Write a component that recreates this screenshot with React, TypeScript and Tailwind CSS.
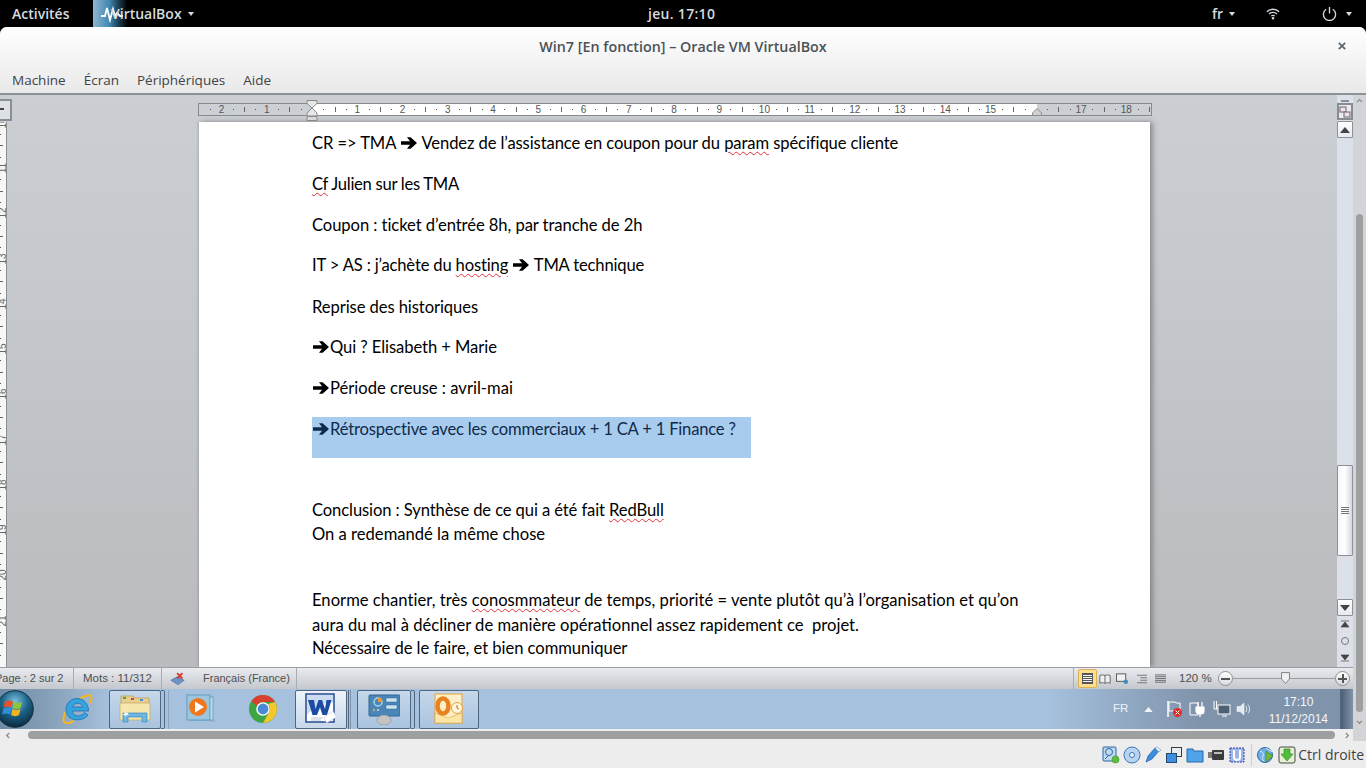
import { Fragment } from 'react';
import type { ReactNode } from 'react';

const cm = 45.24;
const zeroX = 113; // position of 0 inside the ruler

function Arrow({ className = '' }: { className?: string }) {
  return (
    <svg viewBox="0 0 18 14" className={`inline-block w-[18px] h-[14px] align-[-1px] ${className}`}>
      <path d="M1 5.2h9L7 1.2h3.6L17 7l-6.4 5.800H7l3-4H1z" fill="currentColor" />
    </svg>
  );
}

function Squiggle({ children }: { children: string }) {
  return (
    <span className="underline decoration-wavy decoration-[#e0303a] decoration-1 underline-offset-2">{children}</span>
  );
}

function HRuler() {
  const ticks = [];
  for (let i = -9; i <= 74; i++) {
    const x = zeroX + (i * cm) / 4;
    const mod = ((i % 4) + 4) % 4;
    if (i === 0 || i === 64) continue;
    if (mod === 0) {
      ticks.push(
        <span
          key={i}
          className="absolute top-[-1px] -translate-x-1/2 text-[10px] leading-[13px] text-[#555]"
          style={{ left: x }}
        >
          {Math.abs(i / 4)}
        </span>
      );
    } else if (mod === 2) {
      ticks.push(<span key={i} className="absolute top-[3px] w-px h-[5px] bg-[#666]" style={{ left: x }} />);
    } else {
      ticks.push(<span key={i} className="absolute top-[5px] w-px h-px bg-[#555]" style={{ left: x }} />);
    }
  }
  return (
    <div className="relative ml-[198px] w-[954px] h-[13px] border border-[#868a8f] bg-[#ccd0d5]">
      <div className="absolute left-[113px] top-0 w-[725px] h-full bg-white" />
      {ticks}
      <svg viewBox="0 0 12 21" className="absolute left-[107px] top-[-4px] w-3 h-[21px]">
        <path d="M1 .5h10v3L6 8 1 3.500zM6 8l5 5v3H1v-3z" fill="#e6e6e6" stroke="#8a8a8a" />
        <path d="M1 16.500h10v4H1z" fill="#d8d8d8" stroke="#8a8a8a" />
      </svg>
      <svg viewBox="0 0 10 8" className="absolute left-[833px] top-[4px] w-[10px] h-2">
        <path d="M5 .5L9.500 5v2.500H.5V5z" fill="#d0d0d0" stroke="#8a8a8a" />
      </svg>
    </div>
  );
}

function VRuler() {
  const nums = [];
  for (let n = 10; n <= 21; n++) {
    const y = 46 + (n - 11) * 45.25;
    nums.push(
      <Fragment key={n}>
        <span
          className="absolute left-[-3px] w-3 text-center text-[10px] leading-3 text-[#666] -rotate-90"
          style={{ top: y - 6 }}
        >
          {n}
        </span>
        <span className="absolute left-0 w-[3px] h-px bg-[#666]" style={{ top: y + 22.6 }} />
        <span className="absolute left-0 w-px h-px bg-[#555]" style={{ top: y + 11.3 }} />
        <span className="absolute left-0 w-px h-px bg-[#555]" style={{ top: y + 34 }} />
      </Fragment>
    );
  }
  return <div className="relative w-[7px] h-full shrink-0 overflow-hidden bg-[#f7f7f7] border-r border-[#8a8f96]">{nums}</div>;
}

function WordScrollbar() {
  return (
    <div className="w-4 shrink-0 flex flex-col items-stretch bg-[#dce1e9]">
      <div className="mt-[5px] mx-1 h-[2px] bg-[#8c9096]" />
      <div className="mt-[1px] h-[17px] border-2 border-[#888c92] bg-[#e9ebee] flex items-center justify-center">
        <svg viewBox="0 0 12 12" className="w-3 h-3">
          <rect x="1" y="1" width="6" height="5" fill="#f3dfe8" stroke="#666" />
          <rect x="5" y="6" width="6" height="5" fill="#f3dfe8" stroke="#666" />
        </svg>
      </div>
      <div className="mt-px h-[17px] rounded-[1px] border border-[#8c9096] bg-gradient-to-b from-white to-[#e6e9ef] flex items-center justify-center">
        <svg viewBox="0 0 10 6" className="w-[10px] h-[6px]"><path d="M5 0l5 6H0z" fill="#444" /></svg>
      </div>
      <div className="flex-1 min-h-0">
        <div className="mt-[327px] h-[91px] rounded-[1px] border border-[#8c9096] bg-gradient-to-r from-[#f6f7f9] via-white to-[#d3d7df] flex flex-col gap-[1px] items-center justify-center">
          <div className="w-2 h-px bg-[#777]" />
          <div className="w-2 h-px bg-[#777]" />
          <div className="w-2 h-px bg-[#777]" />
          <div className="w-2 h-px bg-[#777]" />
        </div>
      </div>
      <div className="h-[17px] shrink-0 rounded-[1px] border border-[#8c9096] bg-gradient-to-b from-white to-[#e6e9ef] flex items-center justify-center">
        <svg viewBox="0 0 10 6" className="w-[10px] h-[6px]"><path d="M5 6L10 0H0z" fill="#444" /></svg>
      </div>
      <div className="h-[51px] shrink-0 flex flex-col items-center pt-[4px] gap-[8px]">
        <svg viewBox="0 0 8 8" className="w-2 h-2"><path d="M0 1h8M4 2L8 7H0z" fill="#444" stroke="#444" strokeWidth=".7" /></svg>
        <div className="w-[8px] h-[8px] rounded-full border border-[#777] mt-[1px]" />
        <svg viewBox="0 0 8 8" className="w-2 h-2 mt-[1px]"><path d="M0 7h8M4 6L8 1H0z" fill="#444" stroke="#444" strokeWidth=".7" /></svg>
      </div>
    </div>
  );
}

function WinOrb() {
  return (
    <svg viewBox="0 0 38 38" className="w-[38px] h-[38px]">
      <defs>
        <radialGradient id="orb" cx="50%" cy="30%" r="70%">
          <stop offset="0" stopColor="#7cc0dd" />
          <stop offset="0.5" stopColor="#1d6488" />
          <stop offset="1" stopColor="#0b2a40" />
        </radialGradient>
      </defs>
      <circle cx="19" cy="19" r="18.300" fill="url(#orb)" stroke="#16303f" />
      <path d="M9 11.500c3-1.500 5-1.500 8 0l-1.500 6c-3-1.500-5-1.500-8 0z" fill="#e8502a" />
      <path d="M18 12c3 1.500 5 1.500 8 0l-1.500 6c-3 1.500-5 1.500-8 0z" fill="#8cc63a" />
      <path d="M7.500 18.500c3-1.500 5-1.500 8 0l-1.500 6c-3-1.500-5-1.500-8 0z" fill="#2e8fd6" />
      <path d="M16.500 19c3 1.500 5 1.500 8 0l-1.500 6c-3 1.500-5 1.500-8 0z" fill="#f3b51d" />
    </svg>
  );
}

function IeIcon() {
  return (
    <svg viewBox="0 0 32 32" className="w-8 h-8">
      <path d="M3 29C0 21 14 4 29 2" fill="none" stroke="#f2b71e" strokeWidth="2.200" />
      <path d="M29 2c2 1 2 5 0 8M3 29c2 2 6 1 10-1" fill="none" stroke="#f2b71e" strokeWidth="2" />
      <path d="M5 17C5 9.500 10.500 5.500 16 5.500S27.500 9.500 27.500 18H11.500c0 6 8.500 6.500 12 1.500l3.500 2.500c-5 7.500-22 6.500-22-5zM11.500 14h10c0-5-9-5-10 0z" fill="#35a4de" stroke="#1b6fae" strokeWidth=".8" />
    </svg>
  );
}

function FolderIcon() {
  return (
    <svg viewBox="0 0 32 32" className="w-8 h-8">
      <path d="M2 3h12l2 2h14v7H2z" fill="#e8cf8e" stroke="#b49a5a" strokeWidth=".7" />
      <rect x="4" y="4" width="3" height="2" fill="#3fae3f" />
      <rect x="12" y="5" width="3" height="2" fill="#d23f3f" />
      <rect x="21" y="6" width="3" height="2" fill="#3f8fd2" />
      <path d="M1 10h30v17H1z" fill="#f6e7ae" stroke="#c2a868" strokeWidth=".7" />
      <path d="M4 29v-9h24v9h-5v-5H9v5z" fill="#6db7e3" stroke="#3f87b8" strokeWidth=".7" />
      <path d="M6 18l1.500 2 2-1-1 2 2 1-3 0-1 2-1-2-2 0 2-1.500z" fill="#fff" />
    </svg>
  );
}

function MediaIcon() {
  return (
    <svg viewBox="0 0 30 30" className="w-[30px] h-[30px]">
      <rect x="5" y="3" width="22" height="23" fill="#c2dbe9" stroke="#6aa5c8" />
      <rect x="1" y="1" width="23" height="25" fill="#9cc6de" stroke="#5f9dc2" />
      <circle cx="12" cy="13" r="9" fill="#f0771f" />
      <path d="M9 7.500l9 5.500-9 5.500z" fill="#fff" />
      <path d="M24 27h5" stroke="#8aa2b8" />
    </svg>
  );
}

function ChromeIcon() {
  return (
    <svg viewBox="0 0 30 30" className="w-[30px] h-[30px]">
      <circle cx="15" cy="15" r="14" fill="#3da544" />
      <path d="M15 1a14 14 0 0 1 12.100 7L15 8a7 7 0 0 0-6.300 4L3.500 7A14 14 0 0 1 15 1z" fill="#d9402f" />
      <path d="M27.100 8A14 14 0 0 1 15 29l6-10.500A7 7 0 0 0 20 10z" fill="#f5c52c" />
      <circle cx="15" cy="15" r="6.800" fill="#fff" />
      <circle cx="15" cy="15" r="5.400" fill="#4a89d6" />
    </svg>
  );
}

function WordIcon() {
  return (
    <svg viewBox="0 0 32 32" className="w-8 h-8">
      <rect x="1" y="1" width="28" height="28" fill="#fff" stroke="#24478e" strokeWidth="1.500" />
      <path d="M2 2h26v8C20 8 10 14 2 22z" fill="#c9dcf2" />
      <path d="M3 7h6l1.500 9L13.500 7h3.500l3 9L21.500 7h5l-4.500 15h-4.500l-2.500-7.500L12 22H7.500z" fill="#1d4da3" />
      <path d="M19 24l9-6 3.500 6-10 6z" fill="#fff" stroke="#b6c4d6" strokeWidth=".6" />
      <path d="M6 25h12M6 27h10" stroke="#b9c6da" />
    </svg>
  );
}

function ControlIcon() {
  return (
    <svg viewBox="0 0 32 32" className="w-8 h-8">
      <rect x="1" y="2" width="31" height="21" rx="1" fill="#4a86b8" stroke="#2e6594" />
      <circle cx="10" cy="9" r="4" fill="none" stroke="#a8d3ea" strokeWidth="1.500" />
      <path d="M10 4.500a4.500 4.500 0 0 1 4.500 4.500H10z" fill="#f09a2e" />
      <rect x="18" y="5" width="11" height="4" fill="#c9e3f1" stroke="#2e6594" strokeWidth=".5" />
      <rect x="18" y="12" width="11" height="4" fill="#c9e3f1" stroke="#2e6594" strokeWidth=".5" />
      <circle cx="6" cy="17" r="1" fill="#f0b24a" />
      <circle cx="10" cy="17" r="1" fill="#c9e3f1" />
      <ellipse cx="16" cy="27" rx="7" ry="5" fill="#c3c3c3" stroke="#8c8c8c" strokeWidth=".6" />
    </svg>
  );
}

function OutlookIcon() {
  return (
    <svg viewBox="0 0 32 32" className="w-8 h-8">
      <rect x="2" y="1" width="27" height="29" fill="#fdf0c8" stroke="#e3a23a" />
      <path d="M2 20l13 5 14-5v10H2z" fill="#fbe6a8" stroke="#e3a23a" strokeWidth=".6" />
      <ellipse cx="10" cy="13" rx="5.500" ry="7.500" fill="none" stroke="#e9821e" strokeWidth="4.500" />
      <circle cx="24" cy="15" r="5.500" fill="#fff6dc" stroke="#e3a23a" />
      <path d="M24 12v3l2 1" stroke="#c0641a" fill="none" />
    </svg>
  );
}

function TaskButton({ children, active, width, stacked = 0 }: { children: ReactNode; active?: boolean; width: string; stacked?: number }) {
  return (
    <div className="flex h-[39px]">
      <div
        className={`flex items-center justify-center ${width} h-full rounded-[2px] border border-[#4f6680] ${
          active ? 'bg-gradient-to-b from-[#eef3f9] to-[#c8d8ea]' : 'bg-gradient-to-b from-[#c6d8ea] to-[#a9c3de]'
        }`}
      >
        {children}
      </div>
      {stacked === 1 && <div className="w-[4px] border border-l-0 border-[#4f6680] rounded-r-[2px]" />}
      {stacked === 2 && <div className="w-[2px] border-r border-[#4f6680]" />}
      {stacked === 2 && <div className="w-[2px] border-r border-[#7f93aa]" />}
    </div>
  );
}

function Tray() {
  return (
    <div className="flex items-center gap-[5px] text-white">
      <svg viewBox="0 0 10 6" className="w-[9px] h-[5px] mr-[7px]"><path d="M5 0l5 6H0z" fill="#f2f5f8" /></svg>
      <svg viewBox="0 0 18 18" className="w-[18px] h-[18px]">
        <path d="M3 1v16" stroke="#fff" strokeWidth="1.500" />
        <path d="M4 2h6l1 1h4v8H4z" fill="none" stroke="#fff" />
        <circle cx="12.500" cy="12.500" r="4.500" fill="#d9302c" />
        <path d="M10.500 10.500l4 4m0-4l-4 4" stroke="#fff" />
      </svg>
      <svg viewBox="0 0 18 18" className="w-[18px] h-[18px]">
        <path d="M2 3h8v12H2z" fill="none" stroke="#fff" />
        <path d="M8 7h8v4a3 3 0 0 1-3 3h-2a3 3 0 0 1-3-3zM10 2v5m4-5v5M12 14v3" fill="#fff" stroke="#fff" strokeWidth="1.200" />
      </svg>
      <svg viewBox="0 0 18 18" className="w-[18px] h-[18px] ml-[2px]">
        <rect x="5" y="5" width="12" height="9" fill="#4d6076" stroke="#fff" />
        <path d="M1 1v8M3.500 1v8M9 16h5M1 9h4" stroke="#fff" />
      </svg>
      <svg viewBox="0 0 16 16" className="w-4 h-4">
        <path d="M1 5.500h3L8 2v12L4 10.500H1z" fill="#e4eaf0" stroke="#fff" strokeWidth=".5" />
        <path d="M10 5c1 2 1 4 0 6M12 3.500c2 3 2 6 0 9" stroke="#e4eaf0" fill="none" />
      </svg>
    </div>
  );
}

function VboxStatusIcons() {
  return (
    <div className="flex items-center gap-[3px]">
      <svg viewBox="0 0 18 18" className="w-[18px] h-[18px]">
        <rect x="1" y="1" width="13" height="14" rx="1" fill="#bfd9ee" stroke="#2a67a8" />
        <circle cx="7" cy="6" r="3.500" fill="none" stroke="#2a67a8" />
        <path d="M3 13l4-4" stroke="#2a67a8" />
        <circle cx="13.500" cy="13.500" r="3.500" fill="#5fbf3d" stroke="#3d8f25" strokeWidth=".6" />
      </svg>
      <svg viewBox="0 0 18 18" className="w-[18px] h-[18px]">
        <circle cx="9" cy="9" r="8" fill="#b8d4f0" stroke="#3b78b8" />
        <circle cx="9" cy="9" r="2.500" fill="#e8f1fa" stroke="#3b78b8" />
      </svg>
      <svg viewBox="0 0 18 18" className="w-[18px] h-[18px]">
        <path d="M2 16l2-6 7-8 4 3-7 8z" fill="#3b8fe0" stroke="#1f5fa8" strokeWidth=".7" />
        <path d="M11 2l2-1 4 3-2 2z" fill="#e8f1fa" stroke="#7a8ea5" strokeWidth=".6" />
      </svg>
      <svg viewBox="0 0 18 18" className="w-[18px] h-[18px]">
        <rect x="6.500" y="1.500" width="10" height="9" fill="#e8edf2" stroke="#3b3b3b" />
        <rect x="1.500" y="7.500" width="10" height="9" fill="#3b8fe0" stroke="#26496f" />
      </svg>
      <svg viewBox="0 0 18 18" className="w-[18px] h-[18px]">
        <path d="M1 3h6l1 2h9v11H1z" fill="#4fa3e8" stroke="#2a67a8" />
      </svg>
      <svg viewBox="0 0 18 18" className="w-[18px] h-[18px]">
        <rect x="5" y="4" width="12" height="10" rx="1" fill="#3b3b3b" />
        <rect x="1" y="6" width="4" height="6" fill="#7a7a7a" />
        <rect x="7" y="6" width="8" height="2" fill="#bbbbbb" />
      </svg>
      <svg viewBox="0 0 18 18" className="w-[18px] h-[18px]">
        <rect x="2" y="2" width="14" height="14" fill="#9cb6ea" stroke="#2f3fa8" strokeDasharray="2 1" />
        <path d="M6 4v7a3 3 0 0 0 6 0V4" fill="none" stroke="#fff" strokeWidth="2" />
      </svg>
      <div className="w-px h-[22px] bg-[#cfcfcf] mx-[2px]" />
      <svg viewBox="0 0 18 18" className="w-[18px] h-[18px]">
        <circle cx="8" cy="9" r="7.500" fill="#6fb0e8" stroke="#2a67a8" />
        <path d="M3 5c3 1 4 3 3 5s-1 3 1 5M9 2c2 2 5 2 6 4" stroke="#e8f1fa" fill="none" />
        <path d="M9 5l7 5-7 6z" fill="#6fb93f" stroke="#3d7f22" strokeWidth=".6" />
      </svg>
      <svg viewBox="0 0 18 18" className="w-[18px] h-[18px]">
        <rect x="1" y="1" width="16" height="16" rx="2" fill="#e8ecd8" stroke="#3f4f3f" />
        <path d="M6 3h6v5h3l-6 7-6-7h3z" fill="#4fbf3a" stroke="#2f7f22" strokeWidth=".6" />
      </svg>
    </div>
  );
}

export default function App() {
  const line = 'h-[20.75px] leading-[20.75px]';
  return (
    <div className="w-[1366px] h-[768px] overflow-hidden bg-black flex flex-col font-['Open_Sans','Noto_Sans',sans-serif]">
      {/* gnome top bar */}
      <div className="relative h-[27px] shrink-0 flex items-center text-[#d6dbdf] text-[14px] font-semibold">
        <span className="ml-3 w-[59px]">Activités</span>
        <div className="ml-[22px] flex items-center">
          <div className="w-[33px] h-[27px] bg-gradient-to-r from-[#8db5cf] via-[#3e87b0] to-[#050d12] flex items-center justify-center">
            <svg viewBox="0 0 24 18" className="ml-[5px] w-6 h-[18px]">
              <path d="M1 11h4l2-8 3 12 3-11 2 7 2-3 3 3h3" stroke="#fff" strokeWidth="1.800" fill="none" />
            </svg>
          </div>
          <span className="-ml-[15px] relative">VirtualBox</span>
          <span className="ml-[6px] w-0 h-0 border-x-[3.5px] border-x-transparent border-t-[4px] border-t-[#d6dbdf]" />
        </div>
        <span className="absolute left-[648px] tracking-[0.3px]">jeu. 17:10</span>
        <div className="ml-auto flex items-center">
          <span>fr</span>
          <span className="ml-[6px] w-0 h-0 border-x-[3.5px] border-x-transparent border-t-[4px] border-t-[#d6dbdf]" />
          <svg viewBox="0 0 16 14" className="ml-[31px] w-[14px] h-[13px]">
            <path d="M1 5a10 10 0 0 1 14 0M3.500 7.500a6.500 6.500 0 0 1 9 0M6 10a3 3 0 0 1 4 0" stroke="#d6dbdf" strokeWidth="1.500" fill="none" />
            <circle cx="8" cy="12.500" r="1.400" fill="#d6dbdf" />
          </svg>
          <svg viewBox="0 0 16 16" className="ml-[42px] w-[15px] h-[15px]">
            <path d="M4.500 3.500a6.500 6.500 0 1 0 7 0M8 1v7" stroke="#d6dbdf" strokeWidth="1.400" fill="none" />
          </svg>
          <span className="ml-[9px] mr-[14px] w-0 h-0 border-x-[3.5px] border-x-transparent border-t-[4px] border-t-[#d6dbdf]" />
        </div>
      </div>

      {/* virtualbox window */}
      <div className="flex-1 flex flex-col rounded-t-[7px] overflow-hidden bg-[#ededed]">
        <div className="h-[68px] shrink-0 flex flex-col bg-gradient-to-b from-white to-[#e9e9e9] border-b-2 border-[#8e9296]">
          <div className="relative h-[40px] flex items-center justify-center text-[#4b5257] text-[14.3px] font-semibold">
            Win7 [En fonction] – Oracle VM VirtualBox
            <svg viewBox="0 0 10 10" className="absolute right-[20px] top-[15px] w-2 h-2">
              <path d="M1 1l8 8m0-8l-8 8" stroke="#5b6770" strokeWidth="2.200" />
            </svg>
          </div>
          <div className="flex gap-[18px] pl-3 text-[13.5px] leading-[18px] text-[#3e4347] mt-[4px]">
            <span>Machine</span>
            <span>Écran</span>
            <span>Périphériques</span>
            <span>Aide</span>
          </div>
        </div>

        {/* guest screen */}
        <div className="h-[646px] shrink-0 flex font-['Liberation_Sans',sans-serif]">
          <div className="w-[1353px] shrink-0 flex flex-col">
            {/* word surface */}
            <div className="flex-1 min-h-0 flex bg-gradient-to-b from-[#cbcfd4] to-[#b9bbbe]">
              <div className="flex-1 min-w-0 flex flex-col">
                <div className="relative h-[27px] shrink-0 pt-2">
                  <div className="absolute left-0 top-[4px] w-[12px] h-[22px] border-2 border-[#8a8f96] border-l-0 bg-[#dde0e4]">
                    <div className="mt-[7px] w-1 h-[2px] bg-[#444]" />
                  </div>
                  <HRuler />
                </div>
                <div className="flex-1 min-h-0 flex">
                  <VRuler />
                  <div className="ml-[192px] w-[951px] h-full bg-white shadow-[3px_0_5px_rgba(90,90,90,0.55),-1px_0_2px_rgba(120,120,120,0.3)] pl-[113px] text-black text-[16.6px] font-['Lato',sans-serif] whitespace-pre overflow-hidden">
                    <p className={`${line} mt-[11px] tracking-[-0.1px]`}>CR =&gt; TMA <Arrow /> Vendez de l’assistance en coupon pour du <Squiggle>param</Squiggle> spécifique cliente</p>
                    <p className={`${line} mt-5 tracking-[-0.28px]`}><Squiggle>Cf</Squiggle> Julien sur les TMA</p>
                    <p className={`${line} mt-5 tracking-[-0.07px]`}>Coupon : ticket d’entrée 8h, par tranche de 2h</p>
                    <p className={`${line} mt-5 tracking-[-0.17px]`}>IT &gt; AS : j’achète du <Squiggle>hosting</Squiggle> <Arrow /> TMA technique</p>
                    <p className={`${line} mt-[20.5px] tracking-[-0.08px]`}>Reprise des historiques</p>
                    <p className={`${line} mt-5 tracking-[-0.08px]`}><Arrow />Qui ? Elisabeth + Marie</p>
                    <p className={`${line} mt-5`}><Arrow />Période creuse : avril-mai</p>
                    <div className="mt-[18.5px] w-[439px] h-[41px] pt-[2px] bg-[#a8ccee] text-[#0f2a4a] leading-[21px] tracking-[-0.19px]"><Arrow />Rétrospective avec les commerciaux + 1 CA + 1 Finance ?</div>
                    <p className={`${line} mt-[42px] tracking-[-0.11px]`}>Conclusion : Synthèse de ce qui a été fait <Squiggle>RedBull</Squiggle></p>
                    <p className={`${line} mt-[3px]`}>On a redemandé la même chose</p>
                    <p className={`${line} mt-[45px] tracking-[0.02px]`}>Enorme chantier, très <Squiggle>conosmmateur</Squiggle> de temps, priorité = vente plutôt qu’à l’organisation et qu’on</p>
                    <p className={`${line} mt-1`}>aura du mal à décliner de manière opérationnel assez rapidement ce  projet.</p>
                    <p className={`${line} mt-[3px] tracking-[-0.05px]`}>Nécessaire de le faire, et bien communiquer</p>
                  </div>
                </div>
              </div>
              <WordScrollbar />
            </div>

            {/* word status bar */}
            <div className="h-[22px] shrink-0 flex items-center border-t border-[#9a9ea4] bg-gradient-to-b from-[#e9ebee] to-[#c4c8ce] text-[11.5px] text-[#4f4f4f]">
              <span className="w-[73px] shrink-0"><span className="block -ml-[5px] whitespace-nowrap text-[11px]">Page : 2 sur 2</span></span>
              <span className="w-px h-full bg-[#a8acb2]" />
              <span className="w-[87px] pl-[9px] whitespace-nowrap">Mots : 11/312</span>
              <span className="w-px h-full bg-[#a8acb2]" />
              <svg viewBox="0 0 18 16" className="ml-2 w-4 h-[15px]">
                <path d="M1 10l7-4 8 4-7 5z" fill="#6f93c8" stroke="#3f5f95" strokeWidth=".6" />
                <path d="M8 2l6 6m0-6l-6 6" stroke="#d8382c" strokeWidth="2" />
              </svg>
              <span className="ml-[17px] w-[93px] text-[11px] whitespace-nowrap">Français (France)</span>
              <span className="w-px h-full bg-[#a8acb2]" />
              <div className="ml-auto h-full flex items-center mr-[3px]">
                <span className="w-px h-full bg-[#a8acb2]" />
                <div className="w-[19px] h-[19px] ml-1 rounded-[2px] border border-[#e0b050] bg-[#fbdf8f] flex items-center justify-center">
                  <div className="w-[11px] h-[11px] border border-[#555] bg-[repeating-linear-gradient(#555_0,#555_1px,#f6f6f6_1px,#f6f6f6_2px)]" />
                </div>
                <svg viewBox="0 0 14 12" className="ml-[2px] w-3 h-3"><path d="M7 2C5 1 3 1 1 2v9c2-1 4-1 6 0 2-1 4-1 6 0V2c-2-1-4-1-6 0zm0 0v9" fill="#f0f0f0" stroke="#555" /></svg>
                <svg viewBox="0 0 14 12" className="ml-[5px] w-[13px] h-3"><rect x=".5" y=".5" width="10" height="8" fill="#f0f0f0" stroke="#555" /><circle cx="10.500" cy="9" r="2.500" fill="#3d8fb8" /></svg>
                <svg viewBox="0 0 12 10" className="ml-[8px] w-[10px] h-[10px]"><path d="M0 .5h12M4 3.500h8M4 6.500h8M0 9.500h12" stroke="#666" /></svg>
                <svg viewBox="0 0 12 10" className="ml-[8px] w-[11px] h-[10px]"><path d="M0 .5h12M0 2.500h12M0 4.500h12M0 6.500h12M0 8.500h12" stroke="#666" /></svg>
                <span className="ml-[13px] w-[31px] whitespace-nowrap">120 %</span>
                <div className="ml-[8px] w-[15px] h-[15px] rounded-full border border-[#8d9197] bg-gradient-to-b from-white to-[#d8dade] flex items-center justify-center">
                  <div className="w-[9px] h-[2px] bg-[#555]" />
                </div>
                <div className="relative w-[102px] h-px bg-[#9a9ea4]">
                  <svg viewBox="0 0 10 13" className="absolute left-[48px] top-[-6px] w-[9px] h-[12px]"><path d="M.5.5h9v7L5 12.500.5 7.500z" fill="#eef0f2" stroke="#777" /></svg>
                </div>
                <div className="w-[15px] h-[15px] rounded-full border border-[#8d9197] bg-gradient-to-b from-white to-[#d8dade] flex items-center justify-center relative">
                  <div className="w-[9px] h-[2px] bg-[#555]" />
                  <div className="absolute w-[2px] h-[9px] bg-[#555]" />
                </div>
              </div>
            </div>

            {/* windows taskbar */}
            <div className="h-[40px] shrink-0 flex items-center bg-[#a6c1dd] relative">
              <div className="absolute left-0 top-0 h-full w-[110px] bg-gradient-to-r from-[#6e8aa5] via-[#8aa3bc] to-[#a6c1dd]" />
              <div className="relative -ml-[4px] w-[38px]"><WinOrb /></div>
              <div className="relative ml-[27px] w-8"><IeIcon /></div>
              <div className="relative ml-[16px] flex items-center">
                <TaskButton width="w-[52px]" stacked={1}><FolderIcon /></TaskButton>
                <div className="w-px h-[39px] ml-[3px] bg-[#8ba4bf]" />
              </div>
              <div className="relative ml-[17px] w-[30px]"><MediaIcon /></div>
              <div className="relative ml-[32px] w-[30px]"><ChromeIcon /></div>
              <div className="relative ml-[17px]"><TaskButton active width="w-[52px]" stacked={2}><WordIcon /></TaskButton></div>
              <div className="relative ml-[6px]"><TaskButton width="w-[54px]" stacked={1}><ControlIcon /></TaskButton></div>
              <div className="relative ml-[4px]"><TaskButton width="w-[60px]"><OutlookIcon /></TaskButton></div>
              <div className="ml-auto relative h-full w-[305px] flex items-center bg-gradient-to-r from-[#a6c1dd] via-[#7f93ab] to-[#7f93ab]">
                <span className="ml-[65px] mr-[16px] text-[11.5px] text-[#eef2f6]">FR</span>
                <Tray />
                <div className="ml-auto mr-[12px] text-[12px] leading-[17px] text-center text-[#f4f7fa] pt-[3px]">
                  <div>17:10</div>
                  <div>11/12/2014</div>
                </div>
                <div className="w-[13px] h-full border-l border-[#4f6680] bg-gradient-to-r from-[#4d5f75] to-[#7f93ab]" />
              </div>
            </div>

            {/* vbox horizontal scrollbar */}
            <div className="h-[12px] shrink-0 flex items-center pl-[5px] bg-[#ededed]">
              <svg viewBox="0 0 6 8" className="w-[5px] h-[7px]"><path d="M5 1L2 4l3 3" stroke="#8a8a8a" strokeWidth="1.500" fill="none" /></svg>
              <div className="ml-[18px] w-[1307px] h-[8px] rounded-full bg-[#9e9fa1]" />
              <svg viewBox="0 0 6 8" className="ml-[10px] w-[5px] h-[7px]"><path d="M1 1l3 3-3 3" stroke="#8a8a8a" strokeWidth="1.500" fill="none" /></svg>
            </div>
          </div>

          {/* vbox vertical scrollbar */}
          <div className="flex-1 flex flex-col items-start pl-[3px] bg-[#d2d4d7]">
            <svg viewBox="0 0 8 6" className="mt-[3px] w-[7px] h-[5px]"><path d="M1 5l3-3 3 3" stroke="#8a8a8a" strokeWidth="1.500" fill="none" /></svg>
            <div className="mt-[111px] w-[7px] h-[498px] rounded-full bg-[#9e9fa1]" />
            <svg viewBox="0 0 8 6" className="mt-[8px] w-[7px] h-[5px]"><path d="M1 1l3 3 3-3" stroke="#8a8a8a" strokeWidth="1.500" fill="none" /></svg>
          </div>
        </div>

        {/* vbox status row */}
        <div className="flex-1 flex items-center justify-end pr-[2px] bg-[#ededed]">
          <VboxStatusIcons />
          <span className="ml-[2px] text-[14px] text-[#3e4347]">Ctrl droite</span>
        </div>
      </div>
    </div>
  );
}
